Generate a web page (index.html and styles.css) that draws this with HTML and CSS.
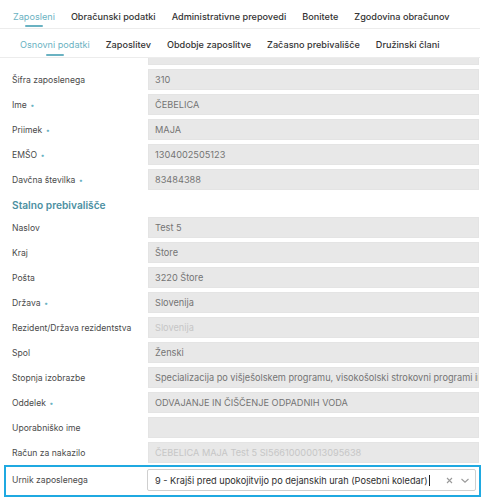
FILE: index.html
```html
<!DOCTYPE html>
<html lang="sl">
<head>
<meta charset="utf-8">
<title>Zaposleni</title>
<link rel="stylesheet" href="styles.css">
</head>
<body>
<nav class="tabs tabs-main">
  <span class="tab active">Zaposleni</span>
  <span class="tab">Obračunski podatki</span>
  <span class="tab">Administrativne prepovedi</span>
  <span class="tab">Bonitete</span>
  <span class="tab">Zgodovina obračunov</span>
</nav>
<nav class="tabs tabs-sub">
  <span class="tab active">Osnovni podatki</span>
  <span class="tab">Zaposlitev</span>
  <span class="tab">Obdobje zaposlitve</span>
  <span class="tab">Začasno prebivališče</span>
  <span class="tab">Družinski člani</span>
</nav>
<main class="form">
  <div class="form-inner">
    <div class="row"><label class="lbl">Oznaka</label><div class="field">310 ČEBELICA MAJA</div></div>
    <div class="row"><label class="lbl">Šifra zaposlenega</label><div class="field">310</div></div>
    <div class="row"><label class="lbl">Ime <span class="req">•</span></label><div class="field">ČEBELICA</div></div>
    <div class="row"><label class="lbl">Priimek <span class="req">•</span></label><div class="field">MAJA</div></div>
    <div class="row"><label class="lbl">EMŠO <span class="req">•</span></label><div class="field">1304002505123</div></div>
    <div class="row"><label class="lbl">Davčna številka <span class="req">•</span></label><div class="field">83484388</div></div>
    <h2 class="section">Stalno prebivališče</h2>
    <div class="row"><label class="lbl">Naslov</label><div class="field">Test 5</div></div>
    <div class="row"><label class="lbl">Kraj</label><div class="field">Štore</div></div>
    <div class="row"><label class="lbl">Pošta</label><div class="field">3220 Štore</div></div>
    <div class="row"><label class="lbl">Država <span class="req">•</span></label><div class="field">Slovenija</div></div>
    <div class="row"><label class="lbl">Rezident/Država rezidentstva</label><div class="field dim">Slovenija</div></div>
    <div class="row"><label class="lbl">Spol</label><div class="field">Ženski</div></div>
    <div class="row"><label class="lbl">Stopnja izobrazbe</label><div class="field">Specializacija po višješolskem programu, visokošolski strokovni programi in podobno</div></div>
    <div class="row"><label class="lbl">Oddelek <span class="req">•</span></label><div class="field">ODVAJANJE IN ČIŠČENJE ODPADNIH VODA</div></div>
    <div class="row"><label class="lbl">Uporabniško ime</label><div class="field"></div></div>
    <div class="row"><label class="lbl">Račun za nakazilo</label><div class="field dim">ČEBELICA MAJA Test 5 SI56610000013095638</div></div>
    <div class="row row-focus">
      <label class="lbl">Urnik zaposlenega</label>
      <div class="select">
        <span class="select-text">9 - Krajši pred upokojitvijo po dejanskih urah (Posebni koledar)<span class="caret"></span></span>
        <svg class="ico" width="9" height="9" viewBox="0 0 9 9"><path d="M2 2 L7 7 M7 2 L2 7" stroke="#9a9a9a" stroke-width="1.1" fill="none"/></svg>
        <svg class="ico" width="10" height="9" viewBox="0 0 10 9"><path d="M1.5 3 L5 6.2 L8.5 3" stroke="#9a9a9a" stroke-width="1.1" fill="none"/></svg>
      </div>
    </div>
  </div>
</main>
</body>
</html>
```
FILE: styles.css
```css
* { box-sizing: border-box; }
html, body { margin: 0; padding: 0; }
body {
  width: 486px;
  height: 504px;
  overflow: hidden;
  background: #ffffff;
  font-family: Inter, "Noto Sans", sans-serif;
  color: #333;
}
.tabs {
  display: flex;
  border-bottom: 1px solid #ececec;
  margin-right: 6px;
  font-size: 9.15px;
  font-weight: 500;
  line-height: 14px;
}
.tabs-main { padding: 10px 0 4px 5px; height: 29px; }
.tabs-sub { padding: 9px 0 5px 12px; height: 29px; }
.tab {
  position: relative;
  padding: 0 8px;
  white-space: nowrap;
  color: #333;
}
.tab.active { color: #6ab2c2; font-weight: 400; }
.tab.active::after {
  content: "";
  position: absolute;
  left: 50%;
  margin-left: -9px;
  width: 18px;
  height: 2px;
  background: #6ab2c2;
  border-radius: 1px;
}
.tabs-main .tab.active::after { bottom: -3px; }
.tabs-sub .tab.active::after { bottom: -4px; }
.form {
  height: 446px;
  overflow: hidden;
}
.form-inner {
  margin-top: -14px;
  display: flex;
  flex-direction: column;
  gap: 4px;
  padding-right: 7px;
}
.row {
  display: grid;
  grid-template-columns: 148px 1fr;
  height: 21px;
  align-items: center;
}
.lbl {
  padding-left: 12px;
  font-size: 8.6px;
  color: #4a4a4a;
  white-space: nowrap;
}
.req { color: #6ab2c2; font-size: 7.5px; margin-left: 1px; }
.field {
  height: 21px;
  background: #e8e8e8;
  border: 1px solid #e4e4e4;
  padding: 0 6px;
  font-size: 9.2px;
  line-height: 19px;
  color: #747474;
  white-space: nowrap;
  overflow: hidden;
}
.field.dim { color: #c6c6c6; }
.section {
  margin: 0;
  height: 19px;
  padding: 4px 0 0 12px;
  font-size: 10.2px;
  line-height: 15px;
  font-weight: 600;
  color: #4c90a2;
}
.row-focus {
  height: 32px;
  margin: -2px -2px 0 4px;
  border: 2px solid #1fa9e1;
  grid-template-columns: 141px 1fr;
  padding: 2px 3px 4px 0;
  align-items: center;
}
.row-focus .lbl { padding-left: 6px; }
.select {
  height: 22px;
  display: flex;
  align-items: center;
  background: #fff;
  border: 1px solid #cfcfcf;
  border-radius: 2px;
  padding: 0 5px 0 7px;
  gap: 6px;
}
.select-text {
  flex: 1;
  font-size: 9.2px;
  color: #2e2e2e;
  white-space: nowrap;
  overflow: hidden;
}
.caret {
  display: inline-block;
  width: 1px;
  height: 11px;
  background: #222;
  vertical-align: -2px;
  margin-left: 1px;
}
.ico { flex: none; }
```
